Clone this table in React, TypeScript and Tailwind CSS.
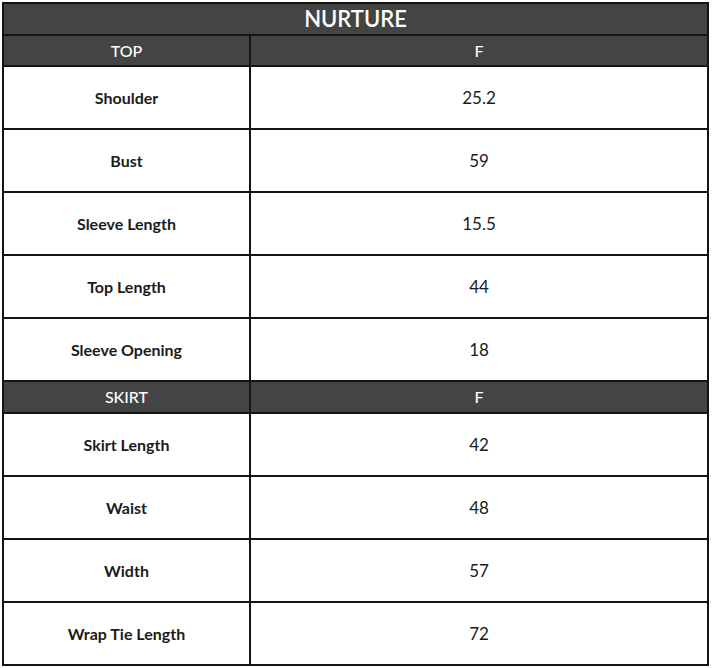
const top = [
    ['Shoulder', '25.2'],
    ['Bust', '59'],
    ['Sleeve Length', '15.5'],
    ['Top Length', '44'],
    ['Sleeve Opening', '18'],
];

const skirt = [
    ['Skirt Length', '42'],
    ['Waist', '48'],
    ['Width', '57'],
    ['Wrap Tie Length', '72'],
];

function HeaderRow({ label, tall }: { label: string; tall?: boolean }) {
    return (
        <tr className={`${tall ? 'h-[32px]' : 'h-[31px]'} bg-[#444444] text-white text-[16px] font-medium leading-none`}>
            <td className="border-2 border-[#141414] text-center p-0">{label}</td>
            <td className="border-2 border-[#141414] text-center p-0">F</td>
        </tr>
    );
}

function DataRow({ label, value }: { label: string; value: string }) {
    return (
        <tr className="h-[63px] bg-white text-[#1b1b1b]">
            <td className="border-2 border-[#141414] text-center text-[16px] font-bold p-0">{label}</td>
            <td className="border-2 border-[#141414] text-center text-[17px] p-0">{value}</td>
        </tr>
    );
}

export default function App() {
    return (
        <div className="w-[712px] h-[668px] bg-white p-[2px]" style={{ fontFamily: 'Lato, "Open Sans", sans-serif' }}>
            <table className="w-[707px] border-collapse table-fixed">
                <colgroup>
                    <col className="w-[247px]" />
                    <col />
                </colgroup>
                <tbody>
                    <tr className="h-[32px] bg-[#444444] text-white leading-none">
                        <td colSpan={2} className="border-2 border-[#141414] text-center text-[22px] font-semibold p-0">
                            NURTURE
                        </td>
                    </tr>
                    <HeaderRow label="TOP" />
                    {top.map(([l, v]) => (
                        <DataRow key={l} label={l} value={v} />
                    ))}
                    <HeaderRow label="SKIRT" tall />
                    {skirt.map(([l, v]) => (
                        <DataRow key={l} label={l} value={v} />
                    ))}
                </tbody>
            </table>
        </div>
    );
}
